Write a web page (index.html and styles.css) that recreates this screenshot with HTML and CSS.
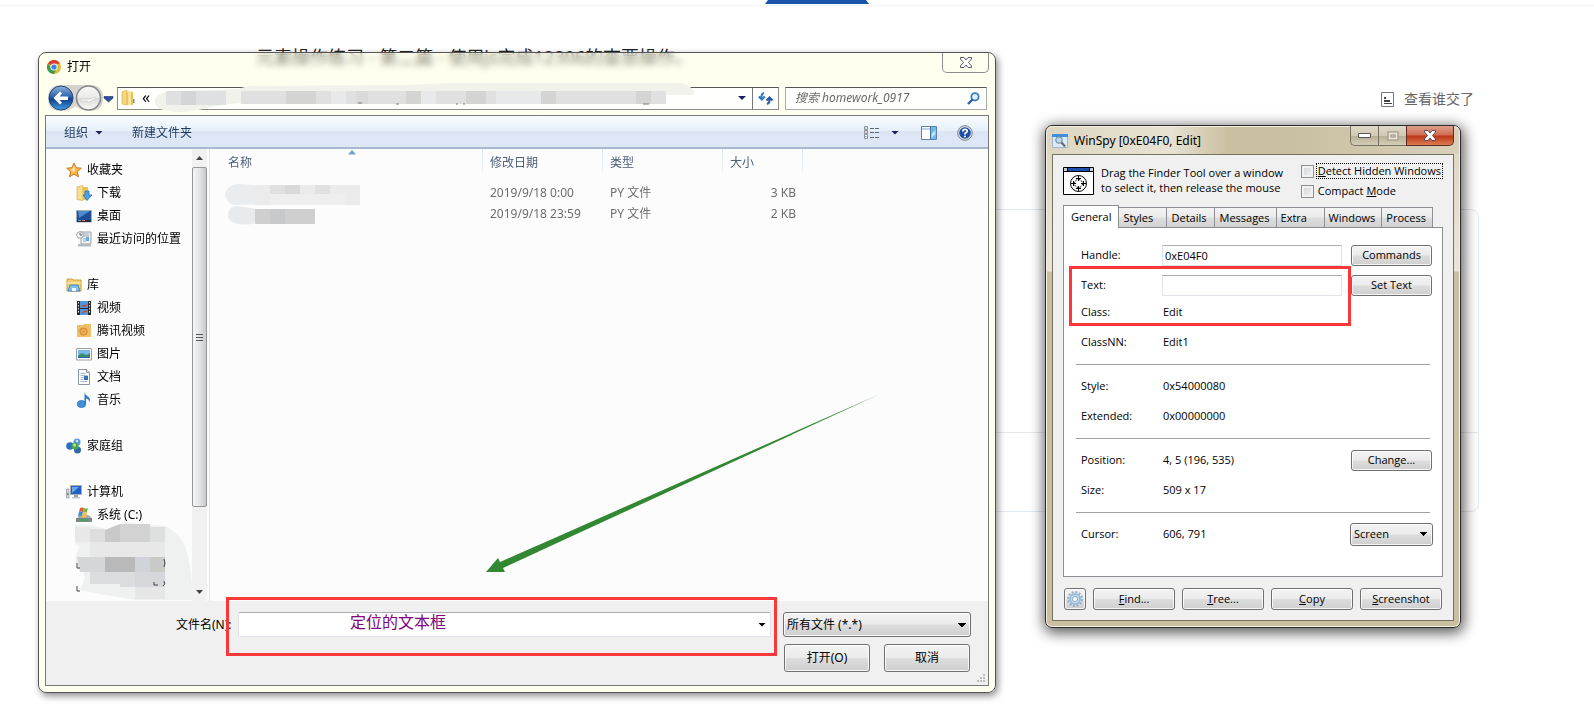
FILE: index.html
```html
<!DOCTYPE html>
<html lang="zh-CN">
<head>
<meta charset="utf-8">
<title>打开</title>
<link rel="stylesheet" href="styles.css">
</head>
<body>
<div class="page">
  <header class="page-top"><div class="page-tab"></div></header>
  <h1 class="page-title">元素操作练习 - 第二篇 - 使用js完成12306的查票操作。</h1>
  <div class="page-actions">
    <a class="who-link" href="#who">
      <svg width="13" height="15" viewBox="0 0 13 15"><path d="M.5.5h12v14H.5z" fill="#fff" stroke="#777"/><path d="M3 5h2v2H3zM3 8h6v2H3zM3 11h8v1H3z" fill="#444"/></svg>
      <span>查看谁交了</span>
    </a>
  </div>
  <div class="card"><div class="card-main"></div><div class="card-foot"></div></div>
</div>

<div class="desktop">
  <section class="dialog" aria-label="打开">
    <div class="dialog-title">
      <svg width="14" height="14" viewBox="0 0 14 14"><circle cx="7" cy="7" r="7" fill="#e8b92f"/><path d="M7 7 .9 3.5A7 7 0 0 1 13.1 3.5L7 4z" fill="#d8402f"/><path d="M.9 3.5A7 7 0 0 0 7 14L9.700 8.500 5 9z" fill="#3d9a50"/><circle cx="7" cy="7" r="3.600" fill="#f4f6f8"/><circle cx="7" cy="7" r="2.600" fill="#3f86d8"/></svg>
      <span>打开</span>
      <button class="dialog-close" aria-label="关闭"><svg width="12" height="11" viewBox="0 0 12 11"><path d="M.5.500h3.500L6 3 8 .5h3.500v1.500L8.500 5.500l3 3.500v1.500H8L6 8 4 10.500H.5V9l3-3.500-3-3.500z" fill="#fff" stroke="#555b66"/></svg></button>
    </div>
    <div class="nav-row">
      <svg class="nav-buttons" width="68" height="28" viewBox="0 0 68 28">
        <defs>
          <linearGradient id="back" x2="0" y2="1"><stop offset="0" stop-color="#8fb2dc"/><stop offset=".45" stop-color="#2e62ad"/><stop offset=".55" stop-color="#123f8a"/><stop offset="1" stop-color="#3fa0e6"/></linearGradient>
          <linearGradient id="fwd" x2="0" y2="1"><stop offset="0" stop-color="#fafaf6"/><stop offset=".5" stop-color="#e9e9e5"/><stop offset=".51" stop-color="#dadad6"/><stop offset="1" stop-color="#fbfbf6"/></linearGradient>
        </defs>
        <path d="M14 1h29q13 0 13 13T43 27Q34 27 28.500 22 23 27 14 27 1 27 1 14T14 1z" fill="#d5d4cc"/>
        <circle cx="14" cy="14" r="12" fill="url(#back)" stroke="#27447a"/>
        <path d="m6.500 14 6.500-6.500 2 2-2.500 3H21v3.500h-8.500l2.500 2.500-2 2z" fill="#fff"/>
        <circle cx="41.500" cy="14" r="12" fill="url(#fwd)" stroke="#83878c" stroke-width="1.500"/>
        <path d="M34 15h9l5-2.500 1 1.500-7 4.500-2-1.500h-6z" fill="#f8f8f5" stroke="#cfcfcb" stroke-width=".8"/>
        <path d="M57 12.500h9v1.500L61.500 18 57 14z" fill="#2c4f9c" stroke="#17296a" stroke-width=".6"/>
      </svg>
      <div class="address">
        <svg class="folder" width="15" height="16" viewBox="0 0 15 16"><path d="M1 2 6 0v15l-5-1z" fill="#f7d77c" stroke="#d5a53f" stroke-width=".6"/><path d="M6 2h6v13H6z" fill="#ecc05a"/><path d="M7 1h3v14H7z" fill="#f9e39b"/><path d="M12 9h1.500v4H12z" fill="#4b9be0"/></svg>
        <span class="chevrons">«</span>
        <span class="address-gap"></span>
        <span class="caret navy"></span>
        <button class="refresh" aria-label="刷新"><svg width="15" height="13" viewBox="0 0 15 13"><path d="M6 1Q3 2 3.500 6M.8 4.500l3 3 3-3" fill="none" stroke="#2f78c4" stroke-width="2"/><path d="M9 12q3-1 2.500-5M8.500 8.500l3-3 3 3" fill="none" stroke="#245aa8" stroke-width="2"/></svg></button>
        <svg class="smudge-address" width="543" height="31" viewBox="0 0 543 31"><path d="M3 15Q5 9 22 8L85 6 95 3 250 2 300 0h225q10 0 16 8v4H400L90 20q-20 1-40 6-25 6-43 0-8-6-4-11z" fill="#f2f2ec"/><path d="M13 8h60v14H13z" fill="#dfe0e1"/><path d="M28 8h15v14H28z" fill="#d3d5d7"/><path d="M88 8h425v13H88z" fill="#e0e0e0"/><path d="M133 8h30v13h-30zM253 8h15v13h-15zM313 8h20v13h-20zM388 8h15v13h-15zM483 8h15v13h-15z" fill="#d4d4d3"/><path d="M178 8h15v13h-15zM268 8h15v13h-15zM343 8h45v13h-45z" fill="#e8e9ea"/><path d="M203 8h12v13h-12z" fill="#dadada"/><path d="M205 20h4M243 21h3M303 21h2M310 21h2M490 21h6" stroke="#777"/></svg>
      </div>
      <div class="search">
        <input type="text" aria-label="搜索" placeholder="搜索 homework_0917">
        <svg width="13" height="13" viewBox="0 0 13 13"><circle cx="8" cy="4.800" r="3.700" fill="#e5f0fb" stroke="#3a7cc6" stroke-width="1.800"/><path d="M5.500 7.500 1 12" stroke="#2b5fa8" stroke-width="2.400"/></svg>
      </div>
    </div>

    <div class="dialog-body">
      <div class="toolbar">
        <button class="tool organize">组织 <span class="caret navy"></span></button>
        <button class="tool">新建文件夹</button>
        <span class="spring"></span>
        <button class="tool" aria-label="更改视图"><svg width="16" height="13" viewBox="0 0 16 13"><path d="M.5.500h3v3h-3zM.5 4.500h3v3h-3zM.5 8.500h3v4h-3z" fill="#fff" stroke="#8a94a5"/><path d="M1.500 5.500h1v1h-1z" fill="#d33"/><path d="M1.500 1.500h1v1h-1zM1.500 10h1v1h-1z" fill="#477"/><path d="M6 2.500h4M11 2.500h4M6 6.500h4M11 6.500h4M6 11.500h4M11 11.500h4" stroke="#5b6575"/></svg></button>
        <span class="caret navy view-caret"></span>
        <button class="tool" aria-label="显示预览窗格"><svg width="16" height="14" viewBox="0 0 16 14"><path d="M.5.500h15v13H.5z" fill="#fff" stroke="#5e7fa8"/><path d="M1 3h9" stroke="#7ea2cc"/><path d="M10 1h5v12h-5z" fill="#6dbbe6"/><path d="m10.500 8 4-4v4l-4 4z" fill="#b9e3f7"/><path d="M9.500 1v12" stroke="#41719f"/></svg></button>
        <button class="tool help" aria-label="获取帮助"><svg width="16" height="16" viewBox="0 0 16 16"><circle cx="8" cy="8" r="7.300" fill="#dfe3ea" stroke="#7d8490"/><circle cx="8" cy="8" r="5.800" fill="#1f4ea6"/><path d="M5.800 6.500Q5.800 4.300 8 4.300t2.200 1.900Q10.200 7.500 8 8.300v1.200" fill="none" stroke="#fff" stroke-width="1.700"/><circle cx="8" cy="11.500" r="1.100" fill="#fff"/></svg></button>
      </div>

      <div class="browser">
        <nav class="places" aria-label="导航窗格">
          <ul class="group">
            <li><a class="root" href="#fav"><svg width="16" height="16" viewBox="0 0 16 16"><path d="m8 1 2.100 4.700 5.200.5-3.900 3.500 1.100 5.100L8 12.200l-4.500 2.600 1.100-5.100L.7 6.200l5.200-.5z" fill="#f8b549" stroke="#c97a24"/><path d="m8 3.500 1.300 3.200-1.300 4-3.500-3.500 2.200-.5z" fill="#fde2a2"/></svg>收藏夹</a></li>
            <li><a href="#dl"><svg width="16" height="16" viewBox="0 0 16 16"><path d="M1 2 7 .5v15l-6-1z" fill="#f7dc8a" stroke="#d3a94a" stroke-width=".6"/><path d="M7 2h5v13H7z" fill="#e9c05c"/><path d="M9 6h4v4h3l-5 5.500L7 10h2z" fill="#4b9fe4" stroke="#1f68b4" stroke-width=".7"/></svg>下载</a></li>
            <li><a href="#desk"><svg width="16" height="16" viewBox="0 0 16 16"><path d="M.5 2.500h15v11.500H.5z" fill="#1d4f98" stroke="#a5acb5"/><path d="m2 3 12 0L3 10z" fill="#4c8bd0"/><path d="M1 12h14v2H1z" fill="#222c3e"/><path d="M2 12h3v1H2z" fill="#58a7e8"/><path d="M6 12h3v1H6z" fill="#e56a48"/></svg>桌面</a></li>
            <li><a href="#recent"><svg width="16" height="16" viewBox="0 0 16 16"><path d="M5 1h10v12H5z" fill="#eef1f4" stroke="#9aa1a9"/><path d="M7 3h6M7 5h6M7 8h3M7 10h3" stroke="#9aa7b5"/><path d="M10 6h3v4h-3z" fill="#62a9de"/><circle cx="4" cy="4" r="3.300" fill="#f6f7f8" stroke="#98a0a8"/><path d="M4 2v2h2" fill="none" stroke="#555"/><path d="M2 13h13v2.500H2z" fill="#b5b9bd"/></svg>最近访问的位置</a></li>
          </ul>
          <ul class="group">
            <li><a class="root" href="#lib"><svg width="16" height="16" viewBox="0 0 16 16"><path d="M1 2h5l1 1h8v11H1z" fill="#f3cf71" stroke="#cf9f3d"/><path d="M1 6h14" stroke="#fff0bd"/><path d="M4 8h8l2 6H2z" fill="#7fc0ea" stroke="#4189bd"/><path d="M6 11h4v3H6z" fill="#eef8fd"/></svg>库</a></li>
            <li><a href="#video"><svg width="16" height="16" viewBox="0 0 16 16"><path d="M1 1h14v14H1z" fill="#252a30"/><path d="M4 1h8v7H4zM4 9h8v6H4z" fill="#4d98dc"/><path d="m4 6 8-2-3 3zM5 14l4-4 3 1z" fill="#c24b3a"/><path d="M2.500 2v12M13.500 2v12" stroke="#e7e9ec" stroke-dasharray="1.500 1.500"/></svg>视频</a></li>
            <li><a href="#tencent"><svg width="16" height="16" viewBox="0 0 16 16"><path d="M1 2h6l1-1h7v13H1z" fill="#efbf68"/><circle cx="7.500" cy="8.500" r="3.300" fill="none" stroke="#d88e39" stroke-width="1.600"/><path d="m6.500 7 3 1.500-3 1.500z" fill="#d88e39"/></svg>腾讯视频</a></li>
            <li><a href="#pic"><svg width="16" height="16" viewBox="0 0 16 16"><path d="M.5 2.500h15v11.500H.5z" fill="#fff" stroke="#98a1aa"/><path d="M2 4h12v8H2z" fill="#79b9ec"/><path d="M2 10q3-4 6-2t6-1v5H2z" fill="#3b8d70"/><path d="M2 11h12v1H2z" fill="#2d65a8"/></svg>图片</a></li>
            <li><a href="#doc"><svg width="16" height="16" viewBox="0 0 16 16"><path d="M2.500.500h8l3 3v12h-11z" fill="#fff" stroke="#8a949f"/><path d="M10.500.500v3h3" fill="#dfe5ea" stroke="#8a949f"/><path d="M4.500 4.500h5M4.500 6.500h7M4.500 8.500h3M4.500 10.500h3M4.500 12.500h7" stroke="#a3b6cb"/><path d="M8 7h4v4H8z" fill="#2d76bd"/></svg>文档</a></li>
            <li><a href="#music"><svg width="16" height="16" viewBox="0 0 16 16"><ellipse cx="5.500" cy="12" rx="4.200" ry="3.500" fill="#3f8fdd" stroke="#1f62ae" stroke-width=".6"/><path d="M8.500 12V.5q1 3 4 4.500 2.500 2 .5 5.500.3-3.500-3-4V12z" fill="#2d78c8"/></svg>音乐</a></li>
          </ul>
          <ul class="group">
            <li><a class="root" href="#home"><svg width="16" height="16" viewBox="0 0 16 16"><circle cx="11" cy="4" r="3.500" fill="#5b9be0"/><circle cx="4" cy="8" r="3.800" fill="#2f6fc0"/><circle cx="11.500" cy="12" r="3.500" fill="#3167ad"/><circle cx="9" cy="8" r="3.500" fill="#4aa851"/><circle cx="8.500" cy="7" r="1.500" fill="#b7e3a8"/><circle cx="11" cy="3" r="1.200" fill="#d3e8fb"/></svg>家庭组</a></li>
          </ul>
          <ul class="group">
            <li><a class="root" href="#pc"><svg width="16" height="16" viewBox="0 0 16 16"><path d="M4.500 1.500h11v9h-11z" fill="#1f62c4" stroke="#a8aeb5"/><path d="M6 3h7l-7 6z" fill="#6da7ea"/><path d="M8 11h4v2H8z" fill="#9aa0a6"/><path d="M6 13h8v1.500H6z" fill="#c1c5c9"/><path d="M.5 5h2.500v9H.5z" fill="#d5d8db" stroke="#8d9398" stroke-width=".7"/><path d="M1 9h1.500v2H1z" fill="#4ba34a"/></svg>计算机</a></li>
            <li><a href="#c"><svg width="16" height="16" viewBox="0 0 16 16"><path d="m2 9 2-1h8l3 2v5H1z" fill="#a5abb0"/><path d="M0 11h16v4H0z" fill="#7d878e"/><path d="M3 12h9v2H3z" fill="#4f9f62"/><path d="M4 1q2-1 4 0l-1 4q-2-1-4 0z" fill="#e35a37"/><path d="M8 1q2 1 4 0l-1 4q-2 1-4 0z" fill="#76b844"/><path d="M3 5q2-1 4 0l-1 4q-2-1-4 0z" fill="#3b8adb"/><path d="M7 5q2 1 4 0l-1 5q-2 1-4 0z" fill="#f3c236"/></svg>系统 (C:)</a></li>
          </ul>
          <svg class="smudge-drives" width="118" height="78" viewBox="0 0 118 78"><path d="M0 3q15-2 35 6Q45 0 55 1l35 3q18 8 23 30 5 25 4 44H60L25 72 5 68Q12 55 8 50-3 42 2 30 8 24 0 22z" fill="#eff0f0"/><path d="M0 5h15v15H0zM15 20h75v15H15z" fill="#e8e8e9"/><path d="M15 7h15v13H15z" fill="#dedede"/><path d="M30 8 45 2v18H30z" fill="#c9c9c9"/><path d="M45 2h30v18H45z" fill="#d2d2d2"/><path d="M75 5h15v15H75z" fill="#dedfdf"/><path d="M2 35h28v15H5z" fill="#d5d6d7"/><path d="M30 35h30v15H30z" fill="#b9b9b9"/><path d="M60 35h15v15H60z" fill="#d0d4d9"/><path d="M75 35h15v15H75z" fill="#c9c9c8"/><path d="M15 50h30v12H15zM45 50h15v15H45z" fill="#dbdcdd"/><path d="M60 50h30v15H60z" fill="#d5d7da"/><path d="M60 65h30v12H60z" fill="#e6e6e7"/><path d="M2 41v5h3M2 64v5h3M89 37q2 4 0 8M79 60v3h4M89 59q2 3-1 5" fill="none" stroke="#444"/></svg>
        </nav>
        <div class="scroll" aria-hidden="true"><span class="tri up"></span><div class="thumb"><i></i><i></i><i></i></div><span class="tri down"></span></div>

        <div class="files">
          <table>
            <colgroup><col class="c-name"><col class="c-date"><col class="c-type"><col class="c-size"><col></colgroup>
            <thead><tr><th>名称</th><th>修改日期</th><th>类型</th><th>大小</th><th class="rest"></th></tr></thead>
            <tbody>
              <tr><td></td><td>2019/9/18 0:00</td><td>PY 文件</td><td class="num">3 KB</td><td></td></tr>
              <tr><td></td><td>2019/9/18 23:59</td><td>PY 文件</td><td class="num">2 KB</td><td></td></tr>
            </tbody>
          </table>
          <svg class="sort-mark" width="8" height="5" viewBox="0 0 8 5"><path d="M0 4.500 4 0l4 4.500z" fill="#6aa3cf"/></svg>
          <svg class="smudge-names" width="136" height="42" viewBox="0 0 136 42"><path d="M0 9Q4 0 14 0l30 2v18l-35 1Q0 18 0 9z" fill="#e9edf0"/><path d="M30 1h105v20H30z" fill="#ebebeb"/><path d="M45 1h30v9H45zM90 1h15v9H90z" fill="#e0e0e0"/><path d="M60 1h15v9H60z" fill="#d9d9d9"/><path d="M45 10h75v11H45z" fill="#eee"/><path d="M3 32q0-10 9-10l20 3v14q-14 3-22 0-7-2-7-7z" fill="#e8ebee"/><path d="M30 25h60v15H30z" fill="#cfcfcf"/><path d="M45 25h15v15H45z" fill="#c8c9ca"/></svg>
          <svg class="arrow" width="395" height="180" viewBox="0 0 395 180"><path d="m0 178 12-14 2 4L394 0 17 174l2 4z" fill="#328832"/></svg>
        </div>
      </div>

      <form class="dialog-foot">
        <label for="fname">文件名(N):</label>
        <div class="combo"><input id="fname" type="text"><span class="caret"></span></div>
        <select aria-label="文件类型"><option>所有文件 (*.*)</option></select>
        <div class="buttons">
          <button type="button">打开(O)</button>
          <button type="button">取消</button>
        </div>
        <svg class="grip" width="9" height="9" viewBox="0 0 9 9"><path d="M6 0h2v2H6zM3 3h2v2H3zM6 3h2v2H6zM0 6h2v2H0zM3 6h2v2H3zM6 6h2v2H6z" fill="#bcbcbc"/></svg>
        <div class="mark mark-field"></div>
        <span class="note">定位的文本框</span>
      </form>
    </div>
  </section>

  <section class="spy" aria-label="WinSpy">
    <div class="spy-title">
      <svg width="16" height="14" viewBox="0 0 16 14"><path d="M.5.500h15v13H.5z" fill="#dcebf8" stroke="#9fb4cb"/><path d="M0 0h16v3H0z" fill="#3f8ede"/><circle cx="7" cy="6" r="3.300" fill="#b4d8f4" stroke="#6d8198"/><path d="m9.500 8.500 3.500 4" stroke="#666" stroke-width="2"/></svg>
      <span>WinSpy [0xE04F0, Edit]</span>
      <div class="caption">
        <button aria-label="最小化"><svg width="13" height="5" viewBox="0 0 13 5"><path d="M.5.500h12v4H.5z" fill="#fff" stroke="#555"/></svg></button>
        <button aria-label="最大化" disabled><svg width="12" height="10" viewBox="0 0 12 10"><path d="M1 1h10v8H1zM4 4h4v2H4z" fill="#eee9dc" stroke="#a9a392" stroke-width="1.500"/></svg></button>
        <button class="close" aria-label="关闭"><svg width="12" height="11" viewBox="0 0 12 11"><path d="M.5.500h3.500L6 3 8 .5h3.500v1.500L8.500 5.500l3 3.500v1.500H8L6 8 4 10.500H.5V9l3-3.500-3-3.500z" fill="#fff" stroke="#5b4b58"/></svg></button>
      </div>
    </div>
    <div class="spy-body">
      <div class="spy-head">
        <svg width="31" height="28" viewBox="0 0 31 28"><path d="M.5.500h30v27H.5z" fill="#fff" stroke="#000"/><path d="M1 1h29v3H1z" fill="#1c4fb0"/><path d="M1 1h4v3H1zM26 1h4v3h-4z" fill="#ccc"/><path d="M0 4.500h31M4.500 1v3M26.500 1v3" stroke="#000"/><circle cx="15.500" cy="16.500" r="8" fill="none" stroke="#000"/><circle cx="15.500" cy="16.500" r="4" fill="none" stroke="#000" stroke-dasharray="2 1"/><path d="M15.500 9v5M15.500 19v5M8 16.500h5M18 16.500h5M13 11.500h5M13 21.500h5M10.500 14v5M20.500 14v5" stroke="#000"/></svg>
        <p>Drag the Finder Tool over a window<br>to select it, then release the mouse</p>
        <div class="checks">
          <label><input type="checkbox"><span class="focus"><u>D</u>etect Hidden Windows</span></label>
          <label><input type="checkbox"><span>Compact <u>M</u>ode</span></label>
        </div>
      </div>
      <div class="tabs" role="tablist">
        <button role="tab" aria-selected="true">General</button>
        <button role="tab">Styles</button>
        <button role="tab">Details</button>
        <button role="tab">Messages</button>
        <button role="tab">Extra</button>
        <button role="tab">Windows</button>
        <button role="tab">Process</button>
      </div>
      <div class="panel" role="tabpanel">
        <div class="fields first">
          <div class="field"><label for="handle">Handle:</label><input id="handle" type="text" value="0xE04F0"><button>Commands</button></div>
          <div class="field"><label for="text">Text:</label><input id="text" type="text"><button>Set Text</button></div>
          <div class="field short"><span>Class:</span><output>Edit</output></div>
          <div class="field tall"><span>ClassNN:</span><output>Edit1</output></div>
        </div>
        <div class="fields">
          <div class="field"><span>Style:</span><output>0x54000080</output></div>
          <div class="field"><span>Extended:</span><output>0x00000000</output></div>
        </div>
        <div class="fields">
          <div class="field"><span>Position:</span><output>4, 5 (196, 535)</output><button>Change...</button></div>
          <div class="field"><span>Size:</span><output>509 x 17</output></div>
        </div>
        <div class="fields">
          <div class="field"><span>Cursor:</span><output>606, 791</output><select aria-label="Cursor"><option>Screen</option></select></div>
        </div>
        <div class="mark mark-text"></div>
      </div>
      <div class="spy-actions">
        <button class="gear" aria-label="Options"><svg width="18" height="18" viewBox="0 0 18 18"><circle cx="9" cy="9" r="7" fill="none" stroke="#8faecb" stroke-width="2" stroke-dasharray="2 1.670"/><circle cx="9" cy="9" r="5" fill="#c5dcf0" stroke="#9dbad6" stroke-width="2"/><circle cx="9" cy="9" r="2.600" fill="#f5f8fa" stroke="#8fb0d0"/></svg></button>
        <button><u>F</u>ind...</button>
        <button><u>T</u>ree...</button>
        <button><u>C</u>opy</button>
        <button><u>S</u>creenshot</button>
      </div>
    </div>
  </section>
</div>
</body>
</html>
```
FILE: styles.css
```css
* { box-sizing: border-box; }
body {
  margin: 0;
  display: grid;
  min-height: 100vh;
  background: #fff;
  color: #000;
  font: 12px/16px "Noto Sans", "Noto Sans CJK SC", sans-serif;
}
button, input, select { font: inherit; color: inherit; margin: 0; padding: 0; border-radius: 0; }
button { border: 0; background: none; }
svg { display: block; flex: none; }
ul { margin: 0; padding: 0; list-style: none; }
.page, .desktop { grid-area: 1 / 1; min-width: 0; }

/* page behind the windows */
.page-top { display: flex; justify-content: center; height: 6px; padding-left: 40px; border-bottom: 1px solid #f4f4f4; }
.page-tab { width: 104px; height: 4px; background: #1d54ab; clip-path: polygon(3px 0, 101px 0, 100% 100%, 0 100%); }
.page-title { margin: 39px 0 0 256px; font: 400 18px/24px "Noto Sans", "Noto Sans CJK SC", sans-serif; color: #222; white-space: nowrap; }
.page-actions { display: flex; justify-content: flex-end; margin: 20px 120px 0 0; }
.who-link { display: flex; align-items: center; gap: 10px; font-size: 14px; line-height: 20px; color: #666; text-decoration: none; }
.card { margin: 100px 115px 0 400px; border: 1px solid #e2e8f0; border-radius: 8px; }
.card-main { height: 223px; border-bottom: 1px solid #e6e9ec; }
.card-foot { height: 78px; }

.desktop {
  position: relative;
  display: flex;
  align-items: flex-start;
  gap: 49px;
  padding: 52px 133px 29px 38px;
}

/* file dialog */
.dialog {
  flex: 1;
  min-width: 0;
  padding: 0 6px 6px;
  border: 1px solid #555;
  border-radius: 8px;
  background: rgba(255, 255, 222, .45);
  backdrop-filter: blur(3px);
  box-shadow: 2px 3px 7px rgba(0, 0, 0, .45);
}
.dialog-title { display: flex; align-items: center; gap: 6px; height: 28px; padding-left: 2px; }
.dialog-close {
  display: grid; place-items: center;
  align-self: flex-start;
  width: 47px; height: 20px;
  margin-left: auto;
  border: 1px solid #8c8c8c; border-top: 0;
  border-radius: 0 0 5px 5px;
}
.nav-row { display: flex; align-items: center; height: 34px; padding: 0 2px 0 2px; }
.address {
  position: relative;
  display: flex; align-items: center;
  flex: 1;
  height: 23px;
  margin-left: 2px;
  border: 1px solid #8d8d88; border-top-color: #555;
  background: #fffffd;
}
.folder { margin: 0 6px 0 3px; }
.chevrons { font-size: 16px; line-height: 20px; padding-bottom: 3px; }
.address-gap { flex: 1; }
.caret { flex: none; width: 8px; height: 4px; background: #000; clip-path: polygon(0 0, 100% 0, 50% 100%); }
.caret.navy { background: #1b2060; }
.refresh { display: grid; place-items: center; width: 26px; height: 21px; margin-left: 6px; border-left: 1px solid #777; }
.smudge-address { position: absolute; left: 35px; top: -5px; }
.search {
  display: flex; align-items: center;
  width: 202px; height: 23px;
  margin-left: 6px; padding: 0 6px 0 9px;
  border: 1px solid #aaa; border-top-color: #555;
  background: #fffffd;
}
.search input { flex: 1; min-width: 0; border: 0; outline: 0; background: none; font-style: italic; }
.search input::placeholder { color: #6b6b6b; opacity: 1; }

.dialog-body { border: 1px solid #777; background: #fcfcfc; }
.toolbar {
  display: flex; align-items: center;
  height: 33px;
  padding: 2px 15px 0 18px;
  border-bottom: 2px solid #a7b9d0;
  background: linear-gradient(#f9fcff, #e6f0fa 48%, #dbe5f4 50%, #dde7f5);
}
.tool { display: flex; align-items: center; gap: 7px; color: #1e395b; white-space: nowrap; }
.organize { margin-right: 29px; }
.spring { flex: 1; }
.view-caret { margin: 0 22px 0 11px; }
.help { margin-left: 20px; }

.browser { display: flex; height: 452px; }
.places { position: relative; flex: none; width: 146px; padding: 9px 0 0 20px; }
.group { margin-bottom: 23px; }
.places a { display: flex; align-items: center; gap: 5px; height: 23px; padding-left: 10px; color: #000; text-decoration: none; white-space: nowrap; }
.places a.root { padding-left: 0; }
.smudge-drives { position: absolute; left: 29px; bottom: 1px; }
.scroll { display: flex; flex-direction: column; align-items: center; flex: none; width: 15px; background: #f1f1f1; }
.tri { width: 7px; height: 4px; background: #444; }
.up { margin: 7px 0; clip-path: polygon(50% 0, 100% 100%, 0 100%); }
.down { margin: auto 0 7px; clip-path: polygon(0 0, 100% 0, 50% 100%); }
.thumb {
  display: flex; flex-direction: column; align-items: center; justify-content: center; gap: 2px;
  width: 100%; height: 340px;
  border: 1px solid #979797; border-radius: 2px;
  background: linear-gradient(90deg, #f6f6f6, #e3e5e6 50%, #c6cacd);
}
.thumb i { width: 7px; height: 1px; background: #555; }
.files { position: relative; flex: 1; min-width: 0; margin-left: 2px; border-left: 1px solid #d9e4f3; overflow: hidden; }
.files table { width: 100%; table-layout: fixed; border-collapse: collapse; color: #6d6d6d; }
.c-name { width: 273px; }
.c-date, .c-type { width: 120px; }
.c-size { width: 80px; }
.files th, .files td { padding: 0 7px; text-align: left; font-weight: 400; white-space: nowrap; }
.files th {
  height: 33px; padding-bottom: 6px;
  color: #4c607a;
  background: linear-gradient(#d5e5f5, #eef4fa) right top / 1px 24px no-repeat;
}
.files th.rest { background: none; }
.files th:first-child { padding-left: 18px; }
.files td { height: 21px; }
.files td.num { text-align: right; }
.sort-mark { position: absolute; left: 138px; top: 1px; }
.smudge-names { position: absolute; left: 15px; top: 35px; }
.arrow { position: absolute; left: 276px; top: 245px; }

.dialog-foot {
  position: relative;
  display: grid;
  grid-template-columns: auto 1fr 188px;
  align-items: center;
  column-gap: 12px; row-gap: 7px;
  padding: 11px 17px 13px 130px;
  background: #f0f0f0;
}
.combo {
  display: flex; align-items: center;
  height: 25px;
  margin-left: -6px; padding-right: 4px;
  border: 1px solid #e2e3ea; border-top-color: #abadb3;
  border-radius: 2px;
  background: #fff;
}
.combo input { flex: 1; min-width: 0; border: 0; outline: 0; background: none; }
.dialog-foot select, .buttons button, .panel button, .panel select, .spy-actions button {
  border: 1px solid #707070;
  border-radius: 3px;
  background: linear-gradient(#f3f3f3, #ebebeb 49%, #ddd 51%, #cfcfcf);
  box-shadow: inset 0 0 0 1px rgba(255, 255, 255, .8);
}
.dialog-foot select, .panel select {
  appearance: none;
  padding: 0 3px;
  background:
    linear-gradient(45deg, transparent 50%, #000 50%) right 8px center / 4px 4px no-repeat,
    linear-gradient(-45deg, transparent 50%, #000 50%) right 4px center / 4px 4px no-repeat,
    linear-gradient(#f3f3f3, #ebebeb 49%, #ddd 51%, #cfcfcf);
}
.dialog-foot select { height: 25px; }
.buttons { grid-column: 3; display: grid; grid-template-columns: 1fr 1fr; gap: 14px; padding: 0 1px; }
.buttons button { height: 28px; }
.grip { position: absolute; right: 2px; bottom: 2px; }
.mark { position: absolute; border: 3px solid #fb3838; pointer-events: none; }
.mark-field { left: 180px; right: 211px; top: -4px; height: 59px; }
.note { position: absolute; left: 304px; top: 9px; font-size: 16px; line-height: 24px; color: #800080; }

/* WinSpy window */
.spy {
  flex: none;
  width: 416px;
  margin-top: 73px;
  padding: 0 6px 6px;
  border: 1px solid #2b2b2b;
  border-radius: 7px;
  background: linear-gradient(#dcd5c0, #e9e5d8 145px, #c9bfa1 146px);
  box-shadow: inset 0 0 0 1px #f3efe2, 1px 3px 14px 2px rgba(0, 0, 0, .65);
}
.spy-title {
  display: flex; align-items: center; gap: 6px;
  height: 28px;
  margin: 0 -5px; padding-left: 5px;
  border-radius: 6px 6px 0 0;
  border-top: 1px solid #f3efe2;
  background: linear-gradient(90deg, #ddd6c2, #e7e2d3 30%, #cabf9f 44%, #c9bfa1 60%, #d8d0ba);
}
.caption { display: flex; align-self: flex-start; margin: -1px 5px 0 auto; }
.caption button {
  display: grid; place-items: center;
  width: 28px; height: 20px;
  border: 1px solid #75705f; border-top: 0; border-right: 0;
  background: linear-gradient(#ded8c7, #d2cab4 50%, #b7ae94 52%, #d5cdb7);
}
.caption button:first-child { border-radius: 0 0 0 5px; }
.caption .close {
  width: 48px;
  border: 1px solid #5d2a25; border-top: 0;
  border-radius: 0 0 5px 0;
  background: linear-gradient(#dda08c, #cf6c52 48%, #bc3416 52%, #dc7c53);
}
.spy-body { padding: 8px 10px 10px; border: 1px solid #77725f; background: #f0f0f0; }
.spy-head { display: flex; align-items: flex-start; height: 42px; }
.spy-head > svg { margin-top: 4px; }
.spy-head, .spy-body button, .spy-body label, .fields { font-family: "Open Sans", "Noto Sans", sans-serif; font-size: 11px; }
.spy-head p { margin: 2px 0 0 7px; line-height: 15px; white-space: nowrap; }
.checks { display: flex; flex-direction: column; gap: 4px; margin-left: auto; }
.checks label { display: flex; align-items: center; gap: 2px; height: 16px; white-space: nowrap; }
.checks span { padding: 0 1px; line-height: 14px; border: 1px dotted transparent; }
.checks .focus { border-color: #000; }
.checks input {
  appearance: none;
  width: 13px; height: 13px;
  border: 1px solid #8e8f8f;
  background: linear-gradient(135deg, #cfd2d6, #f5f5f5);
  box-shadow: inset 0 0 0 2px #f2f2f2;
}
.tabs { display: flex; align-items: flex-end; position: relative; z-index: 1; margin-bottom: -1px; }
.tabs button {
  min-width: 48px; height: 21px;
  padding: 0 6px 0 4px;
  text-align: left;
  border: 1px solid #8c8e94; border-left-width: 0;
  background: linear-gradient(#f3f3f3, #ebebeb 49%, #ddd 51%, #d2d2d2);
}
.tabs button[aria-selected] {
  height: 23px;
  padding: 0 7px;
  border-left-width: 1px; border-bottom: 0;
  background: #fff;
}
.panel {
  position: relative;
  padding: 0 10px 27px 12px;
  border: 1px solid #8c8e94;
  background: #fff;
}
.fields { padding: 6px 0 8px; background: linear-gradient(#a0a0a0, #a0a0a0) left bottom / calc(100% - 2px) 1px no-repeat; }
.fields.first { padding: 12px 0 5px; }
.fields:nth-child(4) { padding-bottom: 0; background: none; }
.field { display: grid; grid-template-columns: 81px 1fr 81px; align-items: center; height: 30px; padding-left: 5px; }
.field.short { height: 24px; }
.field.tall { height: 36px; }
.field input { width: calc(100% - 9px); height: 21px; padding: 0 2px; border: 1px solid #e2e3ea; border-top-color: #abadb3; }
.field output { padding-left: 1px; }
.field button { height: 21px; }
.field select { height: 23px; margin: 0 -1px; }
.mark-text { left: 5px; right: 91px; top: 38px; height: 60px; }
.spy-actions { display: flex; gap: 7px; margin-top: 11px; padding: 0 1px; }
.spy-actions button { flex: 1; height: 22px; }
.spy-actions .gear { display: grid; place-items: center; flex: none; width: 22px; }
```
